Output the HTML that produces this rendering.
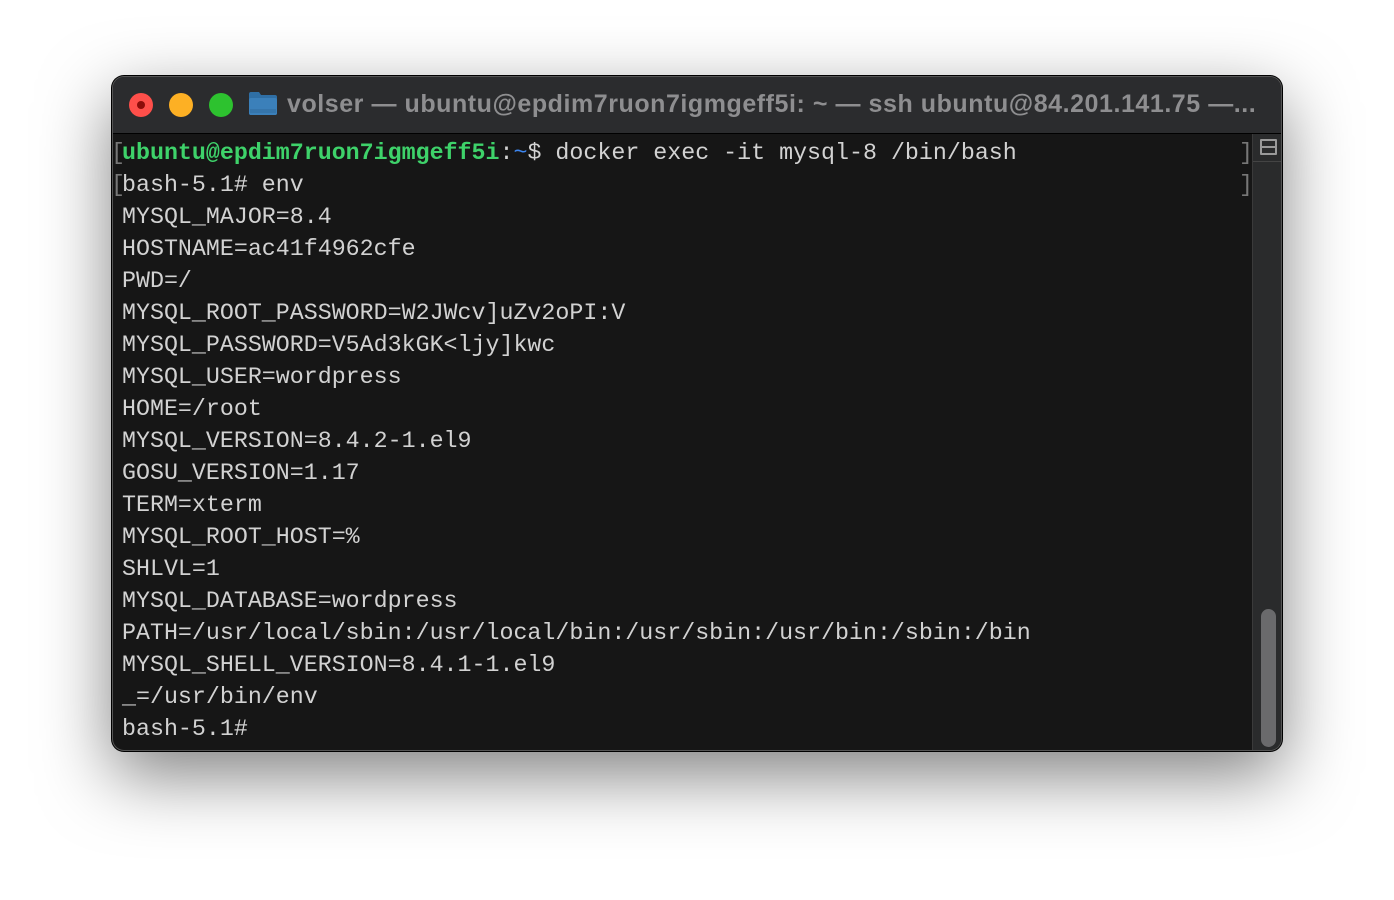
<!DOCTYPE html>
<html><head><meta charset="utf-8"><style>
html,body{margin:0;padding:0;background:#fff;width:1394px;height:900px;overflow:hidden}
.win{position:absolute;left:112px;top:76px;width:1170px;height:675px;border-radius:12px;background:#161616;box-shadow:0 0 0 1px #000,0 24px 70px rgba(0,0,0,0.5);overflow:hidden;border:1px solid #555;box-sizing:border-box}
.tb{position:absolute;left:0;top:0;right:0;height:56px;background:#2b2c2e;border-bottom:1px solid #000}
.dot{position:absolute;top:16px;width:24px;height:24px;border-radius:50%}
.title{position:absolute;left:174px;top:13px;font:bold 25px "Liberation Sans",sans-serif;color:#8e8e90;white-space:nowrap;letter-spacing:0.55px}
.term{position:absolute;left:1px;top:60px;font:23.3px/32px "Liberation Mono",monospace;color:#d2d2d2;white-space:pre}
.term div{padding-left:8px;height:32px}
.term div.k{padding-left:0}
.k .br{display:inline-block;width:8px;overflow:visible;text-indent:-3px}
.g{color:#3ed26a;font-weight:bold}.b{color:#3d86f0}.br{color:#777}
.sb{position:absolute;left:1139px;top:57px;width:30px;bottom:0;background:#2a2b2c;border-left:1px solid #3a3a3a}
.thumb{position:absolute;left:8px;top:475px;width:15px;height:138px;border-radius:8px;background:#6a6a6c}
</style></head><body>
<div class="win">
<div class="tb">
<div class="dot" style="left:16px;background:#fe4f4a"><div style="position:absolute;left:8px;top:8px;width:8px;height:8px;border-radius:50%;background:#8c0d0a"></div></div>
<div class="dot" style="left:56px;background:#fdb024"></div>
<div class="dot" style="left:96px;background:#2dc22f"></div>
<svg style="position:absolute;left:135px;top:13px" width="30" height="26" viewBox="0 0 30 26"><path d="M1 4 Q1 2 3 2 H11 L13 5 H27 Q29 5 29 7 V23 Q29 25 27 25 H3 Q1 25 1 23 Z" fill="#2f6fa5"/><rect x="1" y="8" width="28" height="17" rx="2" fill="#3b80ba"/><line x1="2" y1="20" x2="28" y2="20" stroke="#2f6a9c"/><line x1="2" y1="22" x2="28" y2="22" stroke="#2f6a9c"/></svg>
<div class="title">volser — ubuntu@epdim7ruon7igmgeff5i: ~ — ssh ubuntu@84.201.141.75 —...</div>
</div>
<div class="term"><div class="k"><span class="br">[</span><span class="g">ubuntu@epdim7ruon7igmgeff5i</span>:<span class="b">~</span>$ docker exec -it mysql-8 /bin/bash</div><div class="k"><span class="br">[</span>bash-5.1# env</div><div>MYSQL_MAJOR=8.4</div><div>HOSTNAME=ac41f4962cfe</div><div>PWD=/</div><div>MYSQL_ROOT_PASSWORD=W2JWcv]uZv2oPI:V</div><div>MYSQL_PASSWORD=V5Ad3kGK&lt;ljy]kwc</div><div>MYSQL_USER=wordpress</div><div>HOME=/root</div><div>MYSQL_VERSION=8.4.2-1.el9</div><div>GOSU_VERSION=1.17</div><div>TERM=xterm</div><div>MYSQL_ROOT_HOST=%</div><div>SHLVL=1</div><div>MYSQL_DATABASE=wordpress</div><div>PATH=/usr/local/sbin:/usr/local/bin:/usr/sbin:/usr/bin:/sbin:/bin</div><div>MYSQL_SHELL_VERSION=8.4.1-1.el9</div><div>_=/usr/bin/env</div><div>bash-5.1#</div></div>
<div style="position:absolute;left:1126px;top:60px;font:23.3px/32px 'Liberation Mono',monospace;color:#777">]<br>]</div>
<div class="sb">
<div style="position:absolute;left:0;top:0;width:30px;height:27px;border-bottom:1px solid #444"></div>
<div style="position:absolute;left:7px;top:5px;width:13px;height:12px;border:2px solid #9a9a9a;border-radius:1px"><div style="position:absolute;left:0;top:5px;width:13px;height:2px;background:#9a9a9a"></div></div>
<div class="thumb"></div>
</div>
</div>
</body></html>
